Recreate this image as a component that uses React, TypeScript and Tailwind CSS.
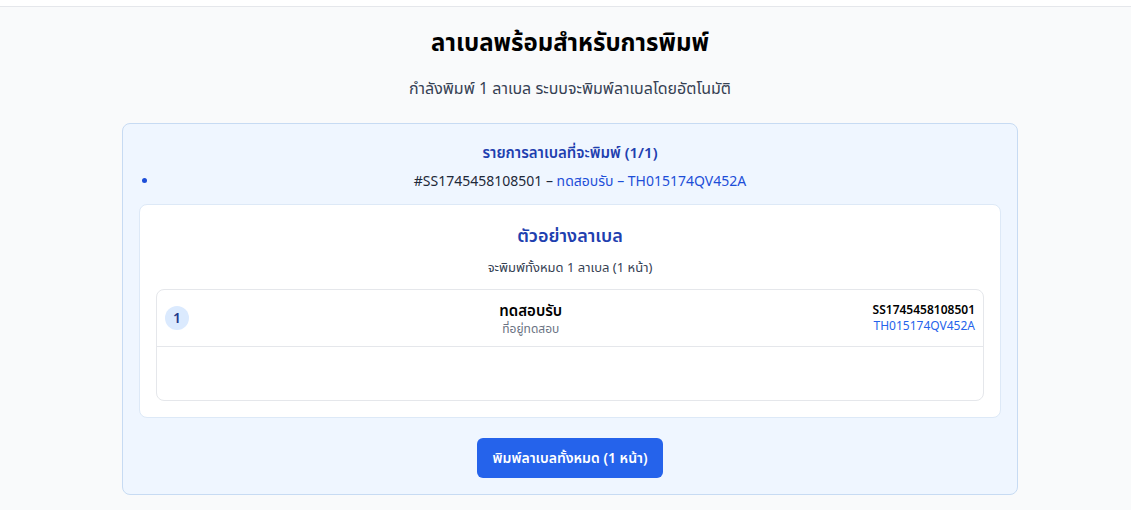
export default function App() {
  return (
    <div
      className="min-h-[510px] bg-[#f9fafb] text-gray-900"
      style={{ fontFamily: '"Noto Sans", "Noto Sans Thai", "Liberation Sans", sans-serif' }}
    >
      <div className="h-[7px] bg-white border-b border-gray-200" />
      <div className="pl-[9px]">
        <div className="max-w-4xl mx-auto">
          <h1 className="text-center text-2xl font-bold text-black mt-[19px] leading-[32px]">
            ลาเบลพร้อมสำหรับการพิมพ์
          </h1>
          <p className="text-center text-base text-gray-700 mt-[18px] leading-6">
            กำลังพิมพ์ 1 ลาเบล ระบบจะพิมพ์ลาเบลโดยอัตโนมัติ
          </p>
          <div className="mt-[23px] bg-[#eff6ff] border border-[#c7dbf3] rounded-lg p-4 pb-4">
            <h2 className="text-center text-[15px] font-semibold text-[#1e40af] leading-6">
              รายการลาเบลที่จะพิมพ์ (1/1)
            </h2>
            <ul className="list-disc pl-5 mt-[5px] marker:text-[#1d4ed8]">
              <li className="text-center text-sm text-gray-800 leading-6">
                #SS1745458108501 – <span className="text-[#1d4ed8]">ทดสอบรับ – TH015174QV452A</span>
              </li>
            </ul>
            <div className="mt-[11px] bg-white rounded-lg border border-[#dde9f7] px-4 pt-[16px] pb-4">
              <h3 className="text-center text-lg font-semibold text-[#1e40af] leading-7">ตัวอย่างลาเบล</h3>
              <p className="text-center text-[13px] text-gray-700 mt-[8px] leading-5">
                จะพิมพ์ทั้งหมด 1 ลาเบล (1 หน้า)
              </p>
              <div className="mt-[12px] border border-gray-200 rounded-lg">
                <div className="flex items-center h-[57px] px-2 border-b border-gray-200">
                  <div className="w-6 h-6 rounded-full bg-[#dbeafe] text-[#1e3a8a] text-sm font-semibold flex items-center justify-center">
                    1
                  </div>
                  <div className="flex-1 text-center">
                    <div className="text-[15px] font-semibold text-black leading-5">ทดสอบรับ</div>
                    <div className="text-xs text-gray-500 leading-4 mt-[1px]">ที่อยู่ทดสอบ</div>
                  </div>
                  <div className="text-right">
                    <div className="text-xs font-semibold text-black leading-4">SS1745458108501</div>
                    <div className="text-xs text-[#2563eb] leading-4">TH015174QV452A</div>
                  </div>
                </div>
                <div className="h-[53px]" />
              </div>
            </div>
            <div className="flex justify-center mt-[20px]">
              <button className="h-10 px-4 rounded-md bg-[#2563eb] text-white text-sm font-semibold">
                พิมพ์ลาเบลทั้งหมด (1 หน้า)
              </button>
            </div>
          </div>
        </div>
      </div>
    </div>
  );
}
